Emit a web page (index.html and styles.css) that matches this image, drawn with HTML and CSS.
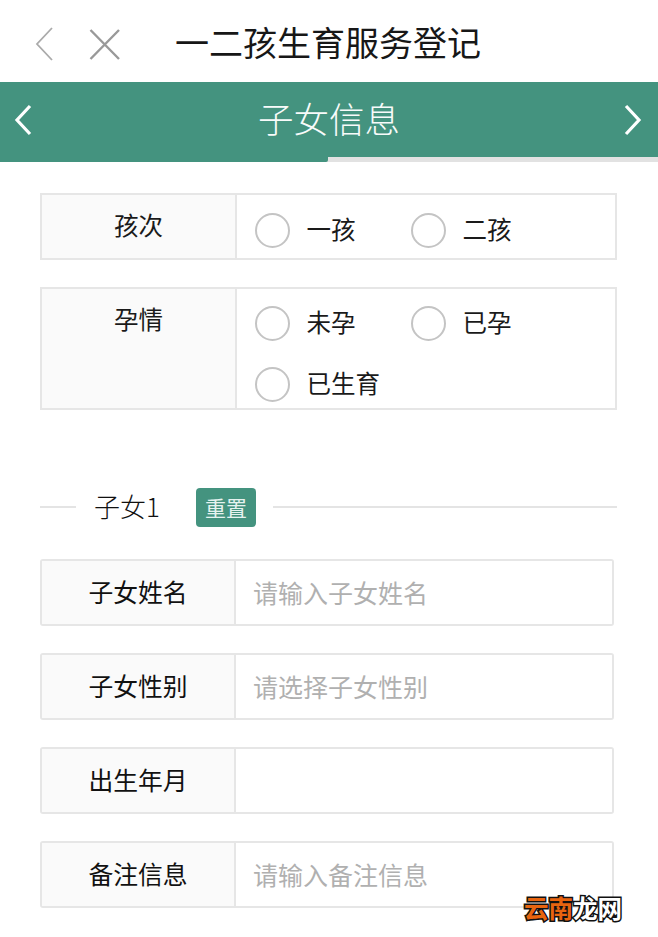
FILE: index.html
```html
<!DOCTYPE html>
<html lang="zh-CN">
<head>
    <meta charset="UTF-8">
    <meta name="viewport" content="width=device-width, initial-scale=1.0">
    <title>一二孩生育服务登记</title>
    <link rel="stylesheet" href="styles.css">
</head>
<body>
    <div class="topbar">
        <svg class="top-back" width="20" height="36" viewBox="0 0 20 36"><path d="M18 2 L3 18 L18 34"/></svg>
        <svg class="top-close" width="34" height="32" viewBox="0 0 34 32"><path d="M3.5 2 L32 31 M32 2 L3.5 31"/></svg>
        <div class="top-title">一二孩生育服务登记</div>
    </div>

    <div class="step-bar">
        <svg class="step-arrow" width="20" height="32" viewBox="0 0 20 32"><path d="M17 2 L4 16 L17 30"/></svg>
        <div class="step-title">子女信息</div>
        <svg class="step-arrow" width="20" height="32" viewBox="0 0 20 32"><path d="M3 2 L16 16 L3 30"/></svg>
    </div>
    <div class="progress"><div class="progress-fill"></div></div>

    <div class="options-card">
        <div class="options-label">孩次</div>
        <div class="options-list">
            <label class="radio"><input type="radio" name="order"><span>一孩</span></label>
            <label class="radio"><input type="radio" name="order"><span>二孩</span></label>
        </div>
    </div>

    <div class="options-card options-card-tall">
        <div class="options-label">孕情</div>
        <div class="options-list">
            <label class="radio"><input type="radio" name="state"><span>未孕</span></label>
            <label class="radio"><input type="radio" name="state"><span>已孕</span></label>
            <label class="radio"><input type="radio" name="state"><span>已生育</span></label>
        </div>
    </div>

    <div class="section-head">
        <div class="line line-short"></div>
        <div class="section-name">子女1</div>
        <button class="btn-reset">重置</button>
        <div class="line"></div>
    </div>

    <div class="field">
        <label class="field-label">子女姓名</label>
        <input class="field-input" type="text" placeholder="请输入子女姓名">
    </div>
    <div class="field">
        <label class="field-label">子女性别</label>
        <input class="field-input" type="text" placeholder="请选择子女性别">
    </div>
    <div class="field">
        <label class="field-label">出生年月</label>
        <input class="field-input" type="text">
    </div>
    <div class="field">
        <label class="field-label">备注信息</label>
        <input class="field-input" type="text" placeholder="请输入备注信息">
    </div>

    <div class="watermark"><span class="wm-orange">云南</span><span class="wm-white">龙网</span></div>
</body>
</html>
```

FILE: styles.css
```css
html, body {
    height: 937px;
    overflow: hidden;
}

body {
    margin: 0;
    position: relative;
    background: #fff;
    color: #1a1a1a;
    font-family: "Noto Sans CJK SC", "Liberation Sans", sans-serif;
}

.topbar {
    height: 82px;
    display: flex;
    align-items: center;
    padding-left: 34px;
    box-sizing: border-box;
}

.topbar svg {
    fill: none;
    margin-top: 5px;
}

.top-back {
    stroke: #aaa;
    stroke-width: 1.8;
}

.top-close {
    margin-left: 33px;
    stroke: #999;
    stroke-width: 2.4;
}

.top-title {
    margin-left: 54px;
    padding-top: 2px;
    font-size: 34px;
    line-height: 80px;
    color: #171717;
}

.step-bar {
    height: 75px;
    background-color: #44937f;
    display: flex;
    align-items: center;
    justify-content: space-between;
    padding: 0 15px 0 13px;
}

.step-arrow {
    fill: none;
    stroke: #fff;
    stroke-width: 3.2;
}

.step-title {
    font-size: 35.5px;
    font-weight: 300;
    color: #f8fbfa;
    margin: 0 0 5px 2px;
}

.progress {
    height: 5px;
    background-color: #e2e2e2;
}

.progress-fill {
    width: 328px;
    height: 100%;
    background-color: #44937f;
    border-radius: 0 0 2px 0;
}

.options-card {
    display: flex;
    box-sizing: border-box;
    width: 577px;
    height: 67px;
    margin: 31px 0 0 40px;
    border: 2px solid #e6e6e6;
}

.options-card-tall {
    height: 123px;
    margin-top: 27px;
}

.options-label {
    width: 195px;
    flex-shrink: 0;
    box-sizing: border-box;
    padding-top: 12px;
    text-align: center;
    font-size: 24.5px;
    line-height: 36px;
    background-color: #fafafa;
    border-right: 2px solid #e6e6e6;
}

.options-list {
    display: flex;
    flex-wrap: wrap;
    align-content: flex-start;
    padding: 17px 0 0 18px;
}

.options-card-tall .options-list {
    padding-top: 16px;
}

.radio {
    display: flex;
    align-items: center;
    width: 156px;
    height: 36px;
    margin-bottom: 25px;
    font-size: 24.5px;
}

.radio input {
    appearance: none;
    width: 35px;
    height: 35px;
    margin: 0 16.5px 0 0;
    border: 2.5px solid #c4c4c4;
    border-radius: 50%;
    background: #fff;
    box-sizing: border-box;
}

.radio span {
    margin-bottom: 4px;
}

.section-head {
    display: flex;
    align-items: center;
    width: 577px;
    height: 39px;
    margin: 78px 0 0 40px;
}

.line {
    flex: 1;
    height: 2px;
    margin-bottom: 2px;
    background-color: #e4e4e4;
}

.line-short {
    flex: none;
    width: 36px;
}

.section-name {
    margin: 0 36px 4px 18px;
    font-size: 26px;
    font-weight: 300;
    color: #111;
    white-space: nowrap;
}

.btn-reset {
    width: 60px;
    height: 39px;
    padding: 0 0 2px;
    margin-right: 17px;
    border: none;
    border-radius: 4px;
    background-color: #44937f;
    color: #e6f2ef;
    font-family: inherit;
    font-size: 21px;
}

.field {
    display: flex;
    box-sizing: border-box;
    width: 574px;
    height: 67px;
    margin: 32px 0 0 40px;
    border: 2px solid #e6e6e6;
    border-radius: 3px;
    overflow: hidden;
}

.field + .field {
    margin-top: 27px;
}

.field-label {
    width: 192px;
    flex-shrink: 0;
    text-align: center;
    font-size: 24.8px;
    line-height: 61px;
    color: #111;
    background-color: #fafafa;
    border-right: 2px solid #e6e6e6;
}

.field-input {
    flex: 1;
    min-width: 0;
    border: none;
    outline: none;
    padding: 0 0 2px 17px;
    font-family: inherit;
    font-size: 25px;
    background: #fff;
}

.field-input::placeholder {
    color: #b0b0b0;
}

.watermark {
    position: absolute;
    left: 524px;
    top: 892px;
    font-size: 24.5px;
    font-weight: 700;
    line-height: 32px;
    -webkit-text-stroke: 3px #111;
    paint-order: stroke fill;
}

.wm-orange {
    color: #e8640f;
}

.wm-white {
    color: #fff;
}
```
